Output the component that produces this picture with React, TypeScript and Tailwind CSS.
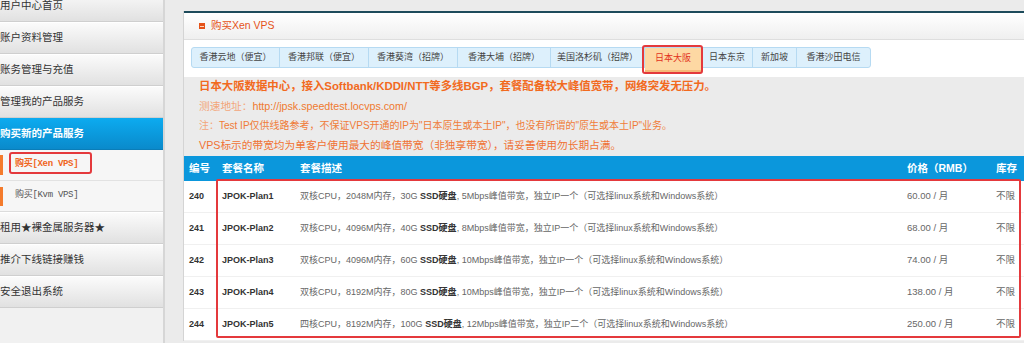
import React from 'react';

const menu = ['用户中心首页', '账户资料管理', '账务管理与充值', '管理我的产品服务'];
const menuBottom = ['租用★裸金属服务器★', '推介下线链接赚钱', '安全退出系统'];

const tabs = [
  { label: '香港云地（便宜）', w: 'w-[88px]' },
  { label: '香港邦联（便宜）', w: 'w-[89px]' },
  { label: '香港葵湾（招牌）', w: 'w-[89px]' },
  { label: '香港大埔（招牌）', w: 'w-[93px]' },
  { label: '美国洛杉矶（招牌）', w: 'w-[94px]' },
  { label: '日本大阪', w: 'w-[57px]', active: true },
  { label: '日本东京', w: 'w-[51px]' },
  { label: '新加坡', w: 'w-[44px]' },
  { label: '香港沙田电信', w: 'w-[73px]' },
];

const plans = [
  { id: 240, name: 'JPOK-Plan1', core: '双核', mem: '2048M', disk: '30G', bw: '5Mbps', ip: '一个', price: '60.00' },
  { id: 241, name: 'JPOK-Plan2', core: '双核', mem: '4096M', disk: '40G', bw: '8Mbps', ip: '一个', price: '68.00' },
  { id: 242, name: 'JPOK-Plan3', core: '双核', mem: '4096M', disk: '60G', bw: '10Mbps', ip: '一个', price: '74.00' },
  { id: 243, name: 'JPOK-Plan4', core: '双核', mem: '8192M', disk: '80G', bw: '10Mbps', ip: '一个', price: '138.00' },
  { id: 244, name: 'JPOK-Plan5', core: '四核', mem: '8192M', disk: '100G', bw: '12Mbps', ip: '二个', price: '250.00' },
];

const cols = 'grid grid-cols-[33px_78px_607px_89px_1fr]';

function Sidebar() {
  return (
    <div className="w-[165px] shrink-0 bg-[#f1f1f1] border-r-2 border-[#d6d6d6] text-[10.5px] text-[#333]">
      <div className="-mt-[10px]">
        {menu.map((m) => (
          <div
            key={m}
            className="h-[32px] flex items-center bg-gradient-to-b from-[#fbfbfb] to-[#e1e1e1] border-b border-[#cfcfcf] border-t border-t-white"
          >
            {m}
          </div>
        ))}
        <div className="h-[32px] flex items-center bg-gradient-to-b from-[#0cabf0] to-[#0a8acb] text-white font-bold border-b border-[#0a7db8]">
          购买新的产品服务
        </div>
        <div className="relative h-[31px] flex items-center bg-[#f6f6f6] border-b border-[#e2e2e2]">
          <div className="w-[3px] h-[20px] bg-[#f47b2c]" />
          <span className="ml-[12px] font-['Liberation_Mono','Noto_Sans_CJK_SC',monospace] text-[9px] tracking-[-0.3px] text-[#f0651c] font-bold">
            购买[Xen VPS]
          </span>
          <div className="absolute left-[9px] top-[2px] w-[83px] h-[22px] border-2 border-[#e4393c] rounded-[3px]" />
        </div>
        <div className="h-[31px] flex items-center bg-[#f6f6f6] border-b border-[#dcdcdc]">
          <div className="w-[3px] h-[19px] bg-[#f47b2c]" />
          <span className="ml-[12px] font-['Liberation_Mono','Noto_Sans_CJK_SC',monospace] text-[9px] tracking-[-0.3px] text-[#555]">
            购买[Kvm VPS]
          </span>
        </div>
        {menuBottom.map((m) => (
          <div
            key={m}
            className="h-[32px] flex items-center bg-gradient-to-b from-[#fbfbfb] to-[#e1e1e1] border-b border-[#cfcfcf] border-t border-t-white"
          >
            {m}
          </div>
        ))}
      </div>
    </div>
  );
}

function Tabs() {
  return (
    <div className="flex items-start">
      <div className="flex h-[21px] border border-[#b6daf2] rounded-[3px] bg-[#ddf0fc] text-[9px] text-[#444]">
        {tabs.map((t) => (
          <div
            key={t.label}
            className={
              t.active
                ? `${t.w} relative flex items-center justify-center bg-[#fdd8a3] border-b-2 border-[#f5b978] h-[24px] text-[#e2321b] border-r border-r-[#b6daf2]`
                : `${t.w} flex items-center justify-center border-r border-[#b6daf2] last:border-r-0`
            }
          >
            {t.label}
            {t.active && (
              <div className="absolute -left-[3px] -top-[3px] w-[61px] h-[29px] border-2 border-[#e4393c] rounded-[3px]" />
            )}
          </div>
        ))}
      </div>
    </div>
  );
}

function PlanTable() {
  return (
    <div className="relative">
      <div className={`${cols} h-[25px] items-center bg-[#0b97dc] text-white font-bold text-[10.5px]`}>
        <div className="pl-[5px]">编号</div>
        <div className="pl-[5px]">套餐名称</div>
        <div className="pl-[5px]">套餐描述</div>
        <div className="pl-[5px]">价格（RMB）</div>
        <div className="pl-[5px]">库存</div>
      </div>
      {plans.map((p) => (
        <div
          key={p.id}
          className={`${cols} h-[32px] items-center bg-white border-b border-[#f0f0f0] text-[9px] text-[#666]`}
        >
          <div className="pl-[5px] font-bold text-[#333]">{p.id}</div>
          <div className="pl-[5px] font-bold text-[#333]">{p.name}</div>
          <div className="pl-[5px] whitespace-nowrap">
            {p.core}CPU，{p.mem}内存，{p.disk} <b className="text-[#333]">SSD硬盘</b>, {p.bw}峰值带宽，独立IP{p.ip}（可选择linux系统和Windows系统）
          </div>
          <div className="pl-[5px] text-[9.5px]">{p.price} / 月</div>
          <div className="pl-[5px] text-[9.5px]">不限</div>
        </div>
      ))}
      <div className="absolute left-[32px] top-[23px] w-[805px] h-[159px] border-2 border-[#e4393c] rounded-[2px]" />
    </div>
  );
}

export default function App() {
  return (
    <div className="w-[1024px] h-[343px] overflow-hidden flex bg-[#ebebeb] font-['Liberation_Sans','Noto_Sans_CJK_SC',sans-serif]">
      <Sidebar />
      <div className="flex-1 pl-[18px] pt-[11px] overflow-hidden">
        <div className="w-[860px] border-l border-[#d4d4d4] bg-white">
          <div className="h-[2px] bg-[#1d4b5b]" />
          <div className="h-[27px] flex items-center pl-[15px] bg-gradient-to-b from-white to-[#efefef] border-b border-[#dedede]">
            <div className="w-[6px] h-[6px] bg-[#e5531a] flex items-center justify-center">
              <div className="w-[4px] h-[1px] bg-[#ffd9c0]" />
            </div>
            <span className="ml-[6px] text-[10.5px] text-[#e5531a]">购买Xen VPS</span>
          </div>
          <div className="h-[37px] pt-[7px] pl-[7px] bg-white">
            <Tabs />
          </div>
          <div className="bg-[#ebebeb] pl-[15px] leading-[19.7px] h-[79px]">
            <div className="font-bold text-[11.4px] text-[#f26a1e] whitespace-nowrap">
              日本大阪数据中心，接入Softbank/KDDI/NTT等多线BGP，套餐配备较大峰值宽带，网络突发无压力。
            </div>
            <div className="text-[10.7px] whitespace-nowrap">
              <span className="text-[#f3a67a]">测速地址：</span>
              <span className="text-[#ef7a30]">http://jpsk.speedtest.locvps.com/</span>
            </div>
            <div className="text-[10px] text-[#f07b38] whitespace-nowrap">
              <span className="text-[#f3a67a]">注：</span>
              Test IP仅供线路参考，不保证VPS开通的IP为"日本原生或本土IP"，也没有所谓的"原生或本土IP"业务。
            </div>
            <div className="text-[10.7px] text-[#f07233] whitespace-nowrap">
              VPS标示的带宽均为单客户使用最大的峰值带宽（非独享带宽），请妥善使用勿长期占满。
            </div>
          </div>
          <PlanTable />
        </div>
      </div>
    </div>
  );
}
